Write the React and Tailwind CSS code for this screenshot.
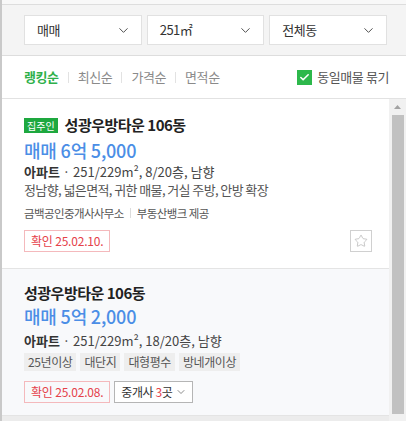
import { ChevronDown, Check, Star } from "lucide-react";

const font = { fontFamily: '"Noto Sans CJK KR", "Noto Sans", sans-serif' };

function Select({ label }) {
  return (
    <div className="flex-1 h-[30px] bg-white border border-[#e1e1e1] flex items-center justify-between pl-[12px] pr-[10px]">
      <span className="text-[13px] text-[#333] tracking-[-0.5px]">{label}</span>
      <ChevronDown size={15} strokeWidth={1.5} className="text-[#444]" />
    </div>
  );
}

function SortTabs() {
  const items = ["랭킹순", "최신순", "가격순", "면적순"];
  return (
    <div className="flex items-center">
      {items.map((t, i) => (
        <div key={t} className="flex items-center">
          {i > 0 && <span className="w-px h-[11px] bg-[#e2e2e2] mx-[9px]" />}
          <span
            className={`text-[13px] tracking-[-0.4px] ${i === 0 ? "text-[#2fb04a] font-bold" : "text-[#8a8a8a]"}`}
          >
            {t}
          </span>
        </div>
      ))}
    </div>
  );
}

function ConfirmBox({ date }) {
  return (
    <span className="h-[22px] px-[6px] border border-[#f4b9bc] text-[#e5414a] text-[12px] flex items-center tracking-[-0.2px]">
      확인 {date}
    </span>
  );
}

export default function App() {
  const tags = ["25년이상", "대단지", "대형평수", "방네개이상"];

  return (
    <div style={font} className="w-[406px] h-[421px] overflow-hidden border-l-2 border-[#c9c9c9] bg-white flex flex-col">
      {/* top strip */}
      <div className="h-[5px] bg-[#f8f8f8] border-b border-[#dddddd] shrink-0" />

      {/* filter selects */}
      <div className="h-[51px] bg-[#f4f4f4] border-b border-[#dddddd] pt-[10px] pl-[22px] pr-[19px] flex gap-[5px] shrink-0">
        <Select label="매매" />
        <Select label="251㎡" />
        <Select label="전체동" />
      </div>

      {/* sort row */}
      <div className="h-[43px] border-b border-[#e2e2e2] pl-[22px] pr-[17px] flex items-center justify-between shrink-0">
        <SortTabs />
        <div className="flex items-center gap-[5px]">
          <span className="w-[15px] h-[15px] bg-[#2db84b] flex items-center justify-center">
            <Check size={11} strokeWidth={3.5} className="text-white" />
          </span>
          <span className="text-[13px] text-[#555] tracking-[-0.4px]">동일매물 묶기</span>
        </div>
      </div>

      {/* list + scrollbar */}
      <div className="flex flex-1 min-h-0">
        <div className="flex-1 flex flex-col">
          {/* item 1 */}
          <div className="h-[170px] border-b border-[#e4e4e4] pl-[22px] pr-[17px] pt-[18px] shrink-0">
            <div className="flex items-center gap-[7px] h-[16px]">
              <span className="bg-[#1ea83f] text-white text-[10px] leading-[15px] h-[15px] px-[3px]">집주인</span>
              <span className="text-[15px] font-bold text-[#222] leading-[16px] tracking-[-0.5px]">성광우방타운 106동</span>
            </div>
            <div className="mt-[6px] text-[18px] leading-[22px] font-medium text-[#4b8ee6] tracking-[-0.2px]">
              매매 6억 5,000
            </div>
            <div className="mt-[2px] text-[13px] leading-[18px] text-[#444] tracking-[0px]">
              <b className="text-[#333]">아파트</b> · 251/229m², 8/20층, 남향
            </div>
            <div className="text-[13px] leading-[18px] text-[#555] tracking-[-0.6px]">
              정남향, 넓은면적, 귀한 매물, 거실 주방, 안방 확장
            </div>
            <div className="mt-[5px] text-[11.5px] leading-[18px] text-[#555] tracking-[-0.6px] flex items-center">
              금백공인중개사사무소
              <span className="w-px h-[10px] bg-[#dcdcdc] mx-[6px]" />
              부동산뱅크 제공
            </div>
            <div className="mt-[8px] flex items-center justify-between">
              <ConfirmBox date="25.02.10." />
              <span className="w-[22px] h-[22px] border border-[#d0d0d0] flex items-center justify-center">
                <Star size={14} strokeWidth={1.1} className="text-[#aaa]" />
              </span>
            </div>
          </div>

          {/* item 2 */}
          <div className="h-[147px] border-b border-[#e4e4e4] bg-[#f8f9fb] pl-[22px] pr-[17px] pt-[16px] shrink-0">
            <div className="text-[15px] font-bold text-[#222] leading-[16px] tracking-[-0.5px]">성광우방타운 106동</div>
            <div className="mt-[4px] text-[18px] leading-[22px] font-medium text-[#4b8ee6] tracking-[-0.2px]">
              매매 5억 2,000
            </div>
            <div className="mt-[5px] text-[13px] leading-[18px] text-[#444] tracking-[0px]">
              <b className="text-[#333]">아파트</b> · 251/229m², 18/20층, 남향
            </div>
            <div className="mt-[3px] flex gap-[4px]">
              {tags.map((t) => (
                <span key={t} className="bg-[#eeeeee] text-[#555] text-[12px] leading-[18px] h-[18px] px-[4px] tracking-[-0.4px]">
                  {t}
                </span>
              ))}
            </div>
            <div className="mt-[10px] flex items-center gap-[4px]">
              <ConfirmBox date="25.02.08." />
              <span className="h-[22px] pl-[6px] pr-[5px] border border-[#b5b5b5] bg-white text-[12px] text-[#333] flex items-center tracking-[-0.4px]">
                <span>
                  중개사 <span className="text-[#e5414a]">3</span>곳
                </span>
                <ChevronDown size={12} strokeWidth={1.5} className="text-[#666] ml-[3px]" />
              </span>
            </div>
          </div>
          <div className="flex-1 bg-[#ececec]" />
        </div>

        {/* scrollbar */}
        <div className="w-[17px] bg-[#f1f1f1] flex flex-col items-center pt-[6px] pb-[7px] shrink-0">
          <svg width="7" height="4" viewBox="0 0 7 4" className="shrink-0">
            <path d="M3.5 0 L7 4 L0 4 Z" fill="#a3a3a3" />
          </svg>
          <div className="mt-[6px] w-[12px] flex-1 bg-[#c1c1c1]" />
        </div>
      </div>
    </div>
  );
}
